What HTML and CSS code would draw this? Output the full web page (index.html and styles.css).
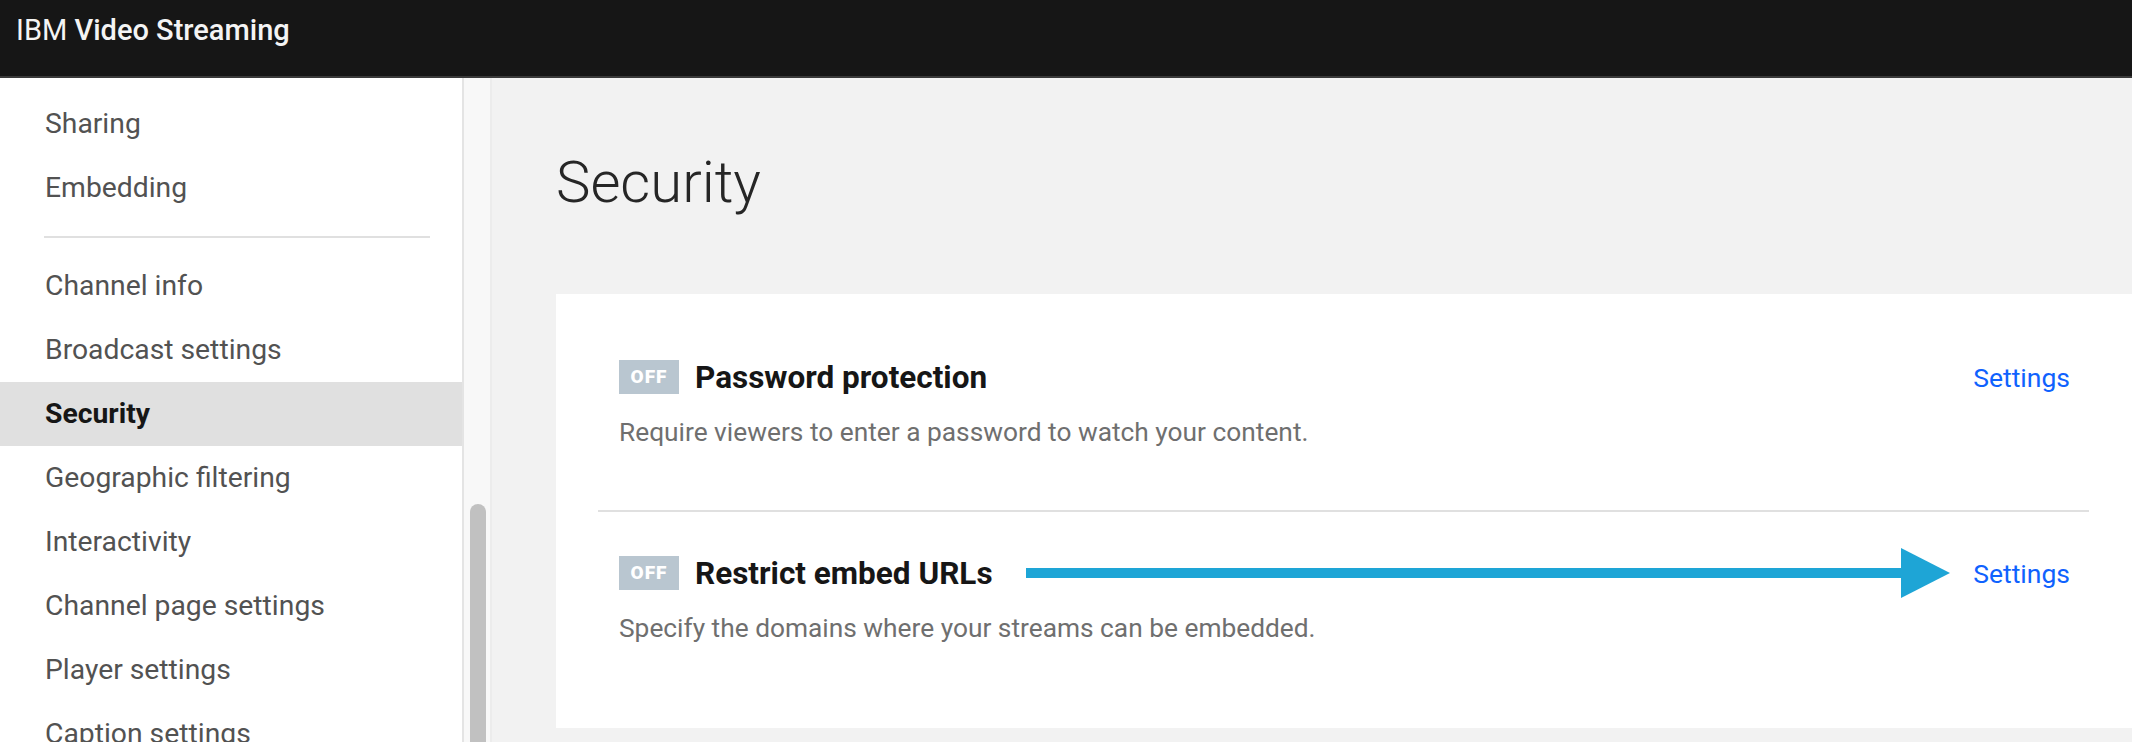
FILE: index.html
```html
<!DOCTYPE html>
<html lang="en">
<head>
    <meta charset="UTF-8">
    <meta name="viewport" content="width=device-width, initial-scale=1.0">
    <title>Security - IBM Video Streaming</title>
    <link rel="stylesheet" href="styles.css">
</head>
<body>
    <header class="topbar">
        <span class="brand">IBM <b>Video Streaming</b></span>
    </header>

    <div class="layout">
        <nav class="sidebar">
            <ul class="menu">
                <li>Sharing</li>
                <li>Embedding</li>
            </ul>
            <hr class="menu-divider">
            <ul class="menu">
                <li>Channel info</li>
                <li>Broadcast settings</li>
                <li class="active">Security</li>
                <li>Geographic filtering</li>
                <li>Interactivity</li>
                <li>Channel page settings</li>
                <li>Player settings</li>
                <li>Caption settings</li>
            </ul>
        </nav>
        <div class="scrolltrack"><div class="thumb"></div></div>

        <main class="content">
            <h1>Security</h1>
            <section class="card">
                <div class="setting">
                    <div class="setting-head">
                        <span class="badge">OFF</span>
                        <h3>Password protection</h3>
                        <a class="link" href="#">Settings</a>
                    </div>
                    <p>Require viewers to enter a password to watch your content.</p>
                </div>
                <div class="setting">
                    <div class="setting-head">
                        <span class="badge">OFF</span>
                        <h3>Restrict embed URLs</h3>
                        <!-- annotation arrow pointing at the link -->
                        <div class="arrow"><span class="arrow-line"></span><span class="arrow-head"></span></div>
                        <a class="link" href="#">Settings</a>
                    </div>
                    <p>Specify the domains where your streams can be embedded.</p>
                </div>
            </section>
        </main>
    </div>
</body>
</html>
```

FILE: styles.css
```css
html, body {
    margin: 0;
    height: 100%;
    overflow: hidden;
}
body {
    font-family: Roboto, "Liberation Sans", sans-serif;
    color: #393939;
    background: #f2f2f2;
}
.topbar {
    height: 78px;
    box-sizing: border-box;
    padding: 10px 16px;
    background: #161616;
    border-bottom: 2px solid #3a3a3a;
}
.brand {
    color: #f4f4f4;
    font-size: 29px;
    line-height: 40px;
}
.brand b {
    font-weight: 500;
}
.layout {
    display: flex;
    height: 664px;
    overflow: hidden;
}
.sidebar {
    width: 462px;
    flex: none;
    background: #fff;
    border-right: 2px solid #e4e4e4;
    padding-top: 14px;
}
.menu {
    list-style: none;
    margin: 0;
    padding: 0;
}
.menu li {
    height: 64px;
    line-height: 64px;
    padding-left: 45px;
    font-size: 28.3px;
    color: #525252;
}
.menu li.active {
    background: #e0e0e0;
    color: #161616;
    font-weight: 700;
}
.menu-divider {
    border: none;
    height: 2px;
    background: #e0e0e0;
    margin: 16px 32px 16px 44px;
}
.scrolltrack {
    width: 26px;
    flex: none;
    background: #f8f8f8;
    border-right: 2px solid #ececec;
}
.thumb {
    width: 16px;
    height: 400px;
    margin: 426px 0 0 6px;
    background: #c1c1c1;
    border-radius: 8px;
}
.content {
    flex: 1;
    padding-left: 64px;
}
.content h1 {
    margin: 72px 0 80px;
    font-size: 58px;
    line-height: 64px;
    font-weight: 300;
    color: #262626;
}
.card {
    background: #fff;
    padding: 22px 43px 22px 42px;
}
.setting {
    padding: 44px 19px 60px 21px;
}
.setting + .setting {
    border-top: 2px solid #e0e0e0;
}
.setting-head {
    display: flex;
    align-items: center;
    height: 34px;
}
.badge {
    width: 60px;
    height: 34px;
    line-height: 34px;
    text-align: center;
    background: #b9c6d0;
    color: #fff;
    font-size: 19px;
    font-weight: 900;
    letter-spacing: 1px;
}
.setting-head h3 {
    margin: 0 0 0 16px;
    font-size: 31.5px;
    font-weight: 700;
    color: #161616;
}
.link {
    margin-left: auto;
    color: #0f62fe;
    font-size: 26.5px;
    text-decoration: none;
}
.setting p {
    margin: 20px 0 0;
    font-size: 26.3px;
    line-height: 36px;
    color: #6f6f6f;
}
.arrow {
    flex: 1;
    display: flex;
    align-items: center;
    margin: 0 23px 0 33px;
}
.arrow-line {
    flex: 1;
    height: 10px;
    background: #1ea5d6;
}
.arrow-head {
    width: 0;
    height: 0;
    border-left: 49px solid #1ea5d6;
    border-top: 25px solid transparent;
    border-bottom: 25px solid transparent;
}
```
